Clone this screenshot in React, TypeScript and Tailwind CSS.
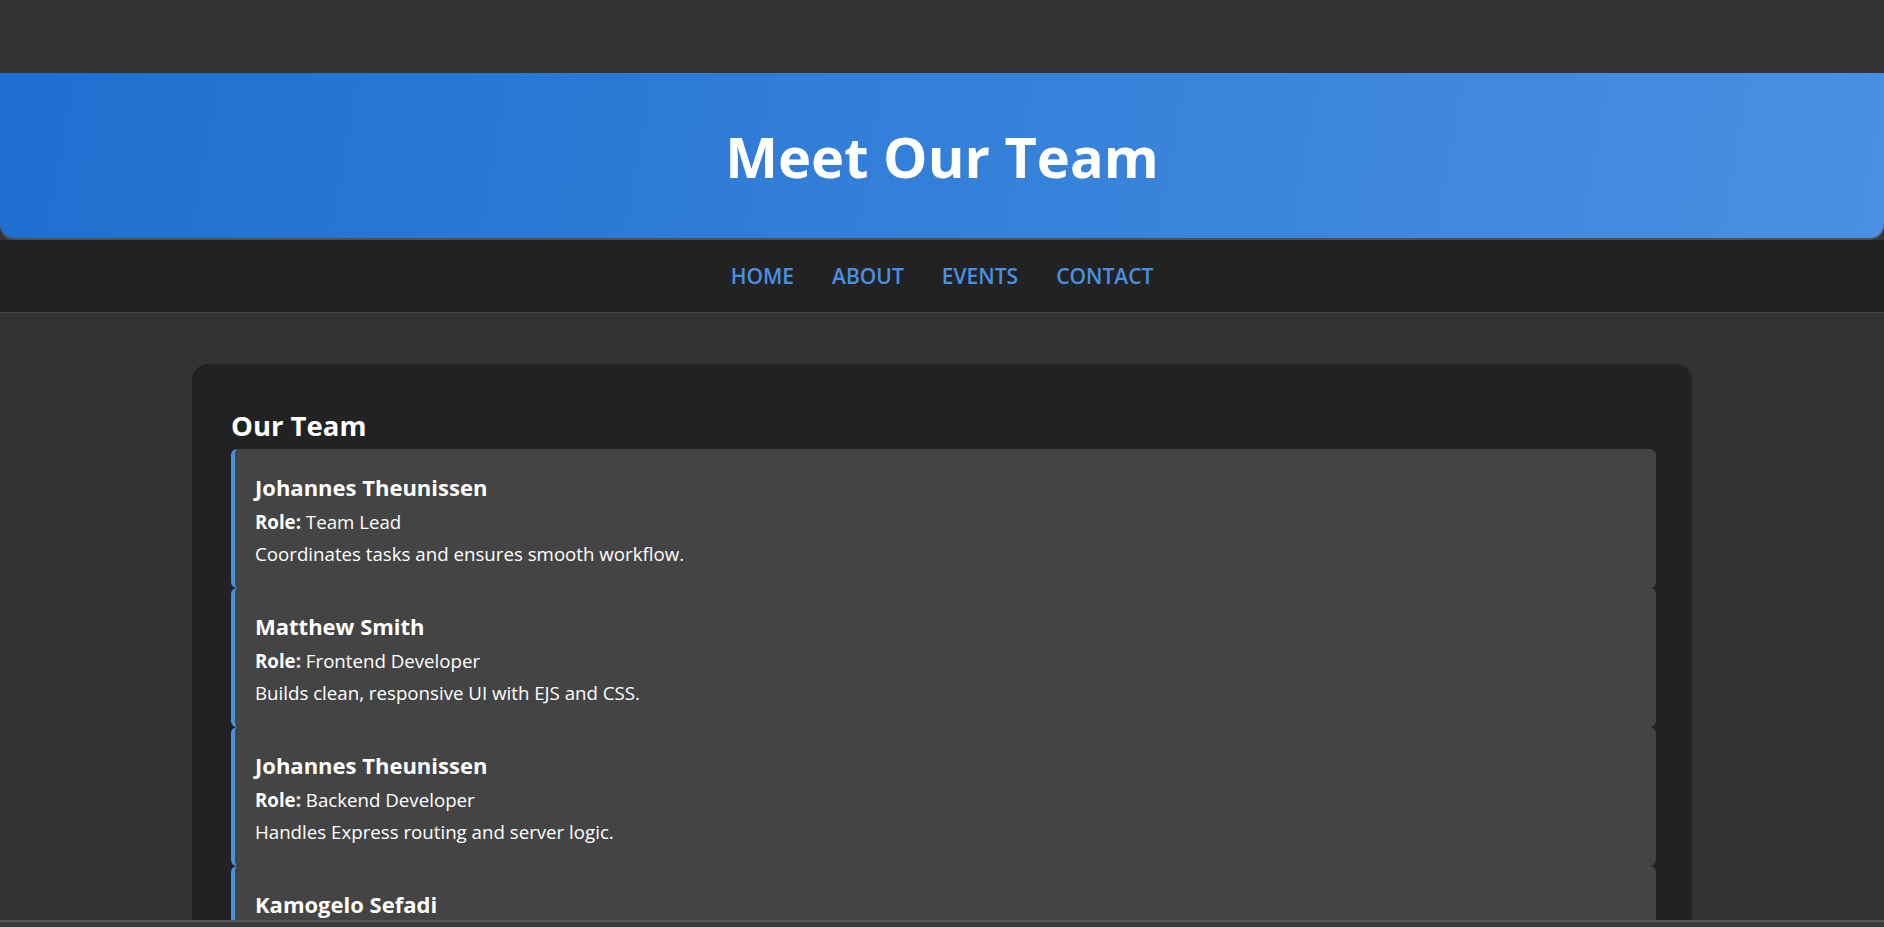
import React from "react";

const members = [
  { name: "Johannes Theunissen", role: "Team Lead", desc: "Coordinates tasks and ensures smooth workflow." },
  { name: "Matthew Smith", role: "Frontend Developer", desc: "Builds clean, responsive UI with EJS and CSS." },
  { name: "Johannes Theunissen", role: "Backend Developer", desc: "Handles Express routing and server logic." },
  { name: "Kamogelo Sefadi", role: "Database Manager", desc: "Manages data storage and queries." },
];

export default function App() {
  return (
    <div
      className="relative h-[927px] w-full overflow-hidden bg-[#333333] text-white"
      style={{ fontFamily: '"Open Sans", "Noto Sans", sans-serif' }}
    >
      <header className="mt-[73px] flex h-[165px] items-center justify-center rounded-b-[14px] bg-[linear-gradient(100deg,#1e6fd0_0%,#4a90e2_100%)] shadow-[0_2px_0_#505050]">
        <h1 className="text-[56px] font-bold leading-[72px] text-white">Meet Our Team</h1>
      </header>

      <nav className="mt-[2px] flex h-[73px] items-center justify-center gap-[38px] border-b border-[#444444] bg-[#222222]">
        {["HOME", "ABOUT", "EVENTS", "CONTACT"].map((l) => (
          <a key={l} className="text-[21px] font-semibold leading-[28px] text-[#4a90e2]">
            {l}
          </a>
        ))}
      </nav>

      <main className="pt-[51px]">
        <section className="mx-auto w-[1500px] rounded-[16px] bg-[#222222] pl-[39px] pr-[36px] pt-[44px] pb-[40px]">
          <h2 className="mb-[5px] text-[27.5px] font-bold leading-[36px] text-white">Our Team</h2>
          <div className="flex flex-col">
            {members.map((m, i) => (
              <div
                key={i}
                className="box-border h-[139px] rounded-[6px] border-l-4 border-[#4a90e2] bg-[#444444] pl-[20px] pt-[23px]"
              >
                <h3 className="mb-[4px] text-[22px] font-bold leading-[30px] text-white">{m.name}</h3>
                <p className="text-[18.7px] leading-[32px] text-white">
                  <strong className="font-bold">Role:</strong> {m.role}
                </p>
                <p className="text-[18.7px] leading-[32px] text-white">{m.desc}</p>
              </div>
            ))}
          </div>
        </section>
      </main>

      <div className="absolute bottom-0 left-0 h-[7px] w-full border-t-2 border-[#555555] bg-[#3a3a3a]" />
    </div>
  );
}
